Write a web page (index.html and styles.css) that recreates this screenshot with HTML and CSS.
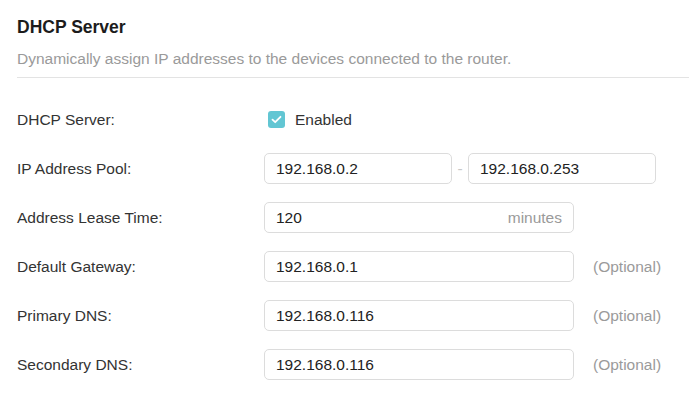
FILE: index.html
```html
<!DOCTYPE html>
<html>
<head>
<meta charset="utf-8">
<link rel="stylesheet" href="styles.css">
</head>
<body>
<div class="panel">
  <div class="header">
    <h2 class="title">DHCP Server</h2>
    <p class="desc">Dynamically assign IP addresses to the devices connected to the router.</p>
  </div>
  <div class="form">
    <div class="row">
      <div class="label">DHCP Server:</div>
      <div class="field">
        <span class="checkbox"><svg width="11" height="9" viewBox="0 0 11 9"><path d="M1.5 4.6 L4.2 7.2 L9.5 1.8" fill="none" stroke="#fff" stroke-width="1.8" stroke-linecap="round" stroke-linejoin="round"/></svg></span>
        <span class="check-text">Enabled</span>
      </div>
    </div>
    <div class="row">
      <div class="label">IP Address Pool:</div>
      <div class="field">
        <div class="input short">192.168.0.2</div>
        <span class="dash">-</span>
        <div class="input short">192.168.0.253</div>
      </div>
    </div>
    <div class="row">
      <div class="label">Address Lease Time:</div>
      <div class="field">
        <div class="input long"><span>120</span><span class="unit">minutes</span></div>
      </div>
    </div>
    <div class="row">
      <div class="label">Default Gateway:</div>
      <div class="field">
        <div class="input long">192.168.0.1</div>
        <span class="hint">(Optional)</span>
      </div>
    </div>
    <div class="row">
      <div class="label">Primary DNS:</div>
      <div class="field">
        <div class="input long">192.168.0.116</div>
        <span class="hint">(Optional)</span>
      </div>
    </div>
    <div class="row">
      <div class="label">Secondary DNS:</div>
      <div class="field">
        <div class="input long">192.168.0.116</div>
        <span class="hint">(Optional)</span>
      </div>
    </div>
  </div>
</div>
</body>
</html>
```
FILE: styles.css
```css
html, body {
  margin: 0;
  padding: 0;
  background: #ffffff;
}
body {
  font-family: "Liberation Sans", Arial, sans-serif;
  color: #333333;
  font-size: 15.5px;
}
.panel {
  padding-left: 17px;
}
.header {
  border-bottom: 1px solid #e3e3e3;
  padding-top: 16px;
  padding-bottom: 8px;
}
.title {
  margin: 0;
  font-size: 17.5px;
  font-weight: bold;
  color: #1c1c1c;
  line-height: 22px;
}
.desc {
  margin: 11px 0 0 0;
  color: #9a9a9a;
  font-size: 15.5px;
  line-height: 20px;
}
.form {
  padding-top: 17px;
}
.row {
  display: flex;
  align-items: center;
  height: 49px;
}
.label {
  width: 247px;
  color: #333333;
  flex: none;
}
.field {
  display: flex;
  align-items: center;
}
.checkbox {
  width: 17px;
  height: 17px;
  border-radius: 3px;
  background: #62c6d3;
  margin-left: 4px;
  display: flex;
  align-items: center;
  justify-content: center;
}
.check-text {
  margin-left: 10px;
  color: #333333;
}
.input {
  box-sizing: border-box;
  height: 31px;
  border: 1px solid #dcdcdc;
  border-radius: 5px;
  padding: 0 11px;
  display: flex;
  align-items: center;
  justify-content: space-between;
  color: #222222;
}
.short {
  width: 188px;
}
.long {
  width: 310px;
}
.unit {
  color: #9a9a9a;
}
.dash {
  width: 16px;
  text-align: center;
  color: #c8c8c8;
}
.hint {
  margin-left: 19px;
  color: #9a9a9a;
}
```
